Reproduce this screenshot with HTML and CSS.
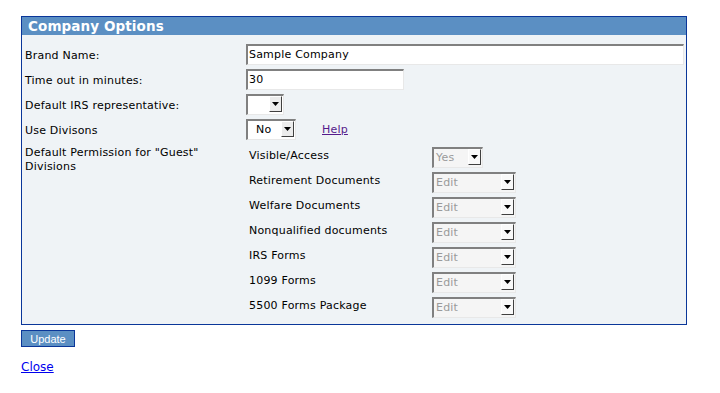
FILE: index.html
```html
<!DOCTYPE html>
<html>
<head>
<meta charset="utf-8">
<title>Company Options</title>
<link rel="stylesheet" href="styles.css">
</head>
<body>
<div class="page">
  <div class="panel">
    <div class="panel-head">Company Options</div>
    <div class="panel-body">
      <div class="label">Brand Name:</div>
      <div class="field"><div class="text wide">Sample Company</div></div>

      <div class="label">Time out in minutes:</div>
      <div class="field"><div class="text mid">30</div></div>

      <div class="label">Default IRS representative:</div>
      <div class="field"><div class="sel s-irs"><span class="val"></span><span class="arr"><svg width="7" height="4" viewBox="0 0 7 4"><polygon points="0,0 7,0 3.5,4" fill="#000"/></svg></span></div></div>

      <div class="label">Use Divisons</div>
      <div class="field"><div class="sel s-no"><span class="val">No</span><span class="arr"><svg width="7" height="4" viewBox="0 0 7 4"><polygon points="0,0 7,0 3.5,4" fill="#000"/></svg></span></div><a class="help" href="#">Help</a></div>

      <div class="label top">Default Permission for "Guest" Divisions</div>
      <div class="sub">
        <div class="sublabel">Visible/Access</div>
        <div class="sel dis s-yes"><span class="val">Yes</span><span class="arr"><svg width="7" height="4" viewBox="0 0 7 4"><polygon points="0,0 7,0 3.5,4" fill="#000"/></svg></span></div>

        <div class="sublabel">Retirement Documents</div>
        <div class="sel dis s-edit"><span class="val">Edit</span><span class="arr"><svg width="7" height="4" viewBox="0 0 7 4"><polygon points="0,0 7,0 3.5,4" fill="#000"/></svg></span></div>

        <div class="sublabel">Welfare Documents</div>
        <div class="sel dis s-edit"><span class="val">Edit</span><span class="arr"><svg width="7" height="4" viewBox="0 0 7 4"><polygon points="0,0 7,0 3.5,4" fill="#000"/></svg></span></div>

        <div class="sublabel">Nonqualified documents</div>
        <div class="sel dis s-edit"><span class="val">Edit</span><span class="arr"><svg width="7" height="4" viewBox="0 0 7 4"><polygon points="0,0 7,0 3.5,4" fill="#000"/></svg></span></div>

        <div class="sublabel">IRS Forms</div>
        <div class="sel dis s-edit"><span class="val">Edit</span><span class="arr"><svg width="7" height="4" viewBox="0 0 7 4"><polygon points="0,0 7,0 3.5,4" fill="#000"/></svg></span></div>

        <div class="sublabel">1099 Forms</div>
        <div class="sel dis s-edit"><span class="val">Edit</span><span class="arr"><svg width="7" height="4" viewBox="0 0 7 4"><polygon points="0,0 7,0 3.5,4" fill="#000"/></svg></span></div>

        <div class="sublabel">5500 Forms Package</div>
        <div class="sel dis s-edit"><span class="val">Edit</span><span class="arr"><svg width="7" height="4" viewBox="0 0 7 4"><polygon points="0,0 7,0 3.5,4" fill="#000"/></svg></span></div>
      </div>
    </div>
  </div>
  <div class="actions">
    <button class="btn" type="button">Update</button>
  </div>
  <a class="close" href="#">Close</a>
</div>
</body>
</html>
```

FILE: styles.css
```css
html, body {
  margin: 0;
  padding: 0;
  background: #ffffff;
}

body {
  font-family: "DejaVu Sans", Verdana, sans-serif;
  font-size: 11px;
  letter-spacing: 0.2px;
  color: #000000;
}

.page {
  padding: 16px 0 0 21px;
}

.panel {
  width: 666px;
  box-sizing: border-box;
  border: 1px solid #0a3699;
  background: #eff3f6;
}

.panel-head {
  height: 18px;
  background: #5b8fc3;
  color: #ffffff;
  font-weight: bold;
  font-size: 13.5px;
  letter-spacing: 0.1px;
  line-height: 19px;
  padding-left: 6px;
}

.panel-body {
  display: grid;
  grid-template-columns: 221px 1fr;
  grid-auto-rows: 21px;
  row-gap: 4px;
  padding: 9px 2px 9px 3px;
}

.label {
  display: flex;
  align-items: center;
  line-height: 14px;
  padding-top: 2px;
}

.label.top {
  align-items: flex-start;
  padding-top: 2px;
  padding-right: 28px;
  grid-row: span 7;
}

.field {
  display: flex;
  align-items: center;
}

.text {
  height: 21px;
  box-sizing: border-box;
  background: #ffffff;
  border-top: 2px solid #808080;
  border-left: 2px solid #808080;
  border-right: 1px solid #e8e8e8;
  border-bottom: 1px solid #e8e8e8;
  padding-left: 1px;
  line-height: 18px;
}

.text.wide { width: 438px; }
.text.mid { width: 158px; }

.sel {
  display: flex;
  height: 21px;
  box-sizing: border-box;
  background: #ffffff;
  border-top: 2px solid #808080;
  border-left: 2px solid #808080;
  border-right: 1px solid #e8e8e8;
  border-bottom: 1px solid #e8e8e8;
}

.sel .val {
  flex: 1;
  padding-left: 2px;
  line-height: 18px;
}

.sel .arr {
  width: 13px;
  height: 16px;
  margin: 0 1px 1px 0;
  box-sizing: border-box;
  border-top: 1px solid #ffffff;
  border-left: 1px solid #ffffff;
  border-right: 1px solid #404040;
  border-bottom: 1px solid #404040;
  background: #ececec;
  display: flex;
  align-items: center;
  justify-content: center;
}

.sel.dis {
  background: #f5f5f5;
}

.sel.dis .val {
  color: #9a9a9a;
}

.sel.dis .arr {
  background: #f9f9f9;
}

.s-irs { width: 38px; }
.s-no { width: 50px; }
.s-no .val { padding-left: 8px; }
.s-yes { width: 51px; }
.s-edit { width: 84px; }

.help {
  margin-left: 26px;
  color: #551a8b;
  text-decoration: underline;
}

.sub {
  grid-row: span 7;
  display: grid;
  grid-template-columns: 183px auto;
  grid-auto-rows: 21px;
  row-gap: 4px;
  justify-content: start;
  padding: 3px 0 0 3px;
}

.sublabel {
  padding-top: 2px;
  line-height: 14px;
}

.actions {
  padding-top: 5px;
}

.btn {
  display: block;
  width: 54px;
  height: 17px;
  margin: 0;
  padding: 0;
  box-sizing: border-box;
  background: #5b8fc3;
  border: 1px solid #0a3699;
  color: #ffffff;
  font-family: "Liberation Sans", Arial, sans-serif;
  font-size: 11px;
  letter-spacing: 0;
  line-height: 14px;
}

.close {
  display: inline-block;
  margin-top: 13px;
  font-size: 12px;
  letter-spacing: 0;
  color: #0000ee;
  text-decoration: underline;
}
```
